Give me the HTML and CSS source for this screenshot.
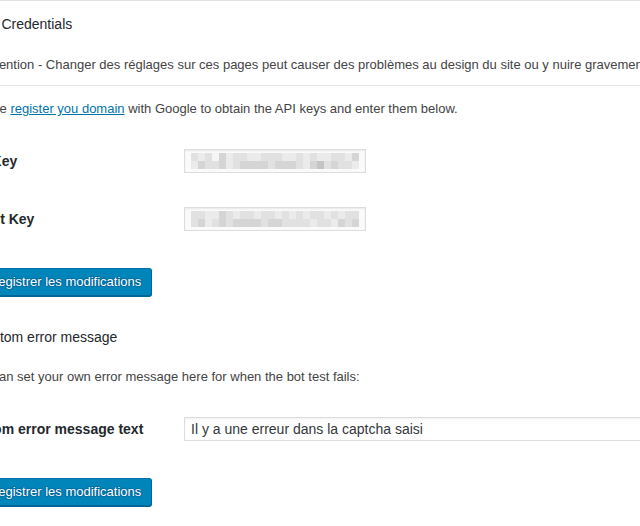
FILE: index.html
```html
<!DOCTYPE html>
<html lang="fr">
<head>
<meta charset="utf-8">
<title>API Credentials</title>
<link rel="stylesheet" href="styles.css">
</head>
<body>
<div class="page">
  <div class="wrap">
    <h3 class="title">API Credentials</h3>
    <div class="notice"><p>Attention - Changer des réglages sur ces pages peut causer des problèmes au design du site ou y nuire gravement.</p></div>
    <p class="desc first">Please <a href="#">register you domain</a> with Google to obtain the API keys and enter them below.</p>
    <div class="form-table">
      <div class="form-row">
        <label class="label">Site Key</label>
        <div class="field short">
          <div class="blur">
            <span class="g2"></span><span class="g1"></span><span class="g2"></span><span class="g0"></span><span class="g3"></span><span class="g1"></span><span class="g2"></span><span class="g2"></span><span class="g1"></span><span class="g1"></span><span class="g2"></span><span class="g2"></span><span class="g2"></span><span class="g1"></span><span class="g1"></span><span class="g2"></span><span class="g1"></span><span class="g2"></span><span class="g1"></span><span class="g1"></span><span class="g2"></span><span class="g2"></span><span class="g1"></span><span class="g3"></span>
            <span class="g1"></span><span class="g3"></span><span class="g2"></span><span class="g2"></span><span class="g3"></span><span class="g1"></span><span class="g2"></span><span class="g3"></span><span class="g3"></span><span class="g3"></span><span class="g3"></span><span class="g2"></span><span class="g3"></span><span class="g3"></span><span class="g3"></span><span class="g2"></span><span class="g1"></span><span class="g3"></span><span class="g4"></span><span class="g2"></span><span class="g3"></span><span class="g2"></span><span class="g2"></span><span class="g1"></span>
          </div>
        </div>
      </div>
      <div class="form-row">
        <label class="label">Secret Key</label>
        <div class="field short">
          <div class="blur">
            <span class="g2"></span><span class="g2"></span><span class="g1"></span><span class="g1"></span><span class="g3"></span><span class="g2"></span><span class="g1"></span><span class="g2"></span><span class="g2"></span><span class="g1"></span><span class="g2"></span><span class="g2"></span><span class="g1"></span><span class="g2"></span><span class="g1"></span><span class="g2"></span><span class="g1"></span><span class="g2"></span><span class="g2"></span><span class="g1"></span><span class="g2"></span><span class="g1"></span><span class="g2"></span><span class="g2"></span>
            <span class="g2"></span><span class="g3"></span><span class="g1"></span><span class="g2"></span><span class="g3"></span><span class="g2"></span><span class="g3"></span><span class="g3"></span><span class="g3"></span><span class="g3"></span><span class="g2"></span><span class="g3"></span><span class="g3"></span><span class="g2"></span><span class="g2"></span><span class="g2"></span><span class="g2"></span><span class="g1"></span><span class="g2"></span><span class="g2"></span><span class="g1"></span><span class="g3"></span><span class="g2"></span><span class="g3"></span>
          </div>
        </div>
      </div>
    </div>
    <button class="button-primary" type="button">Enregistrer les modifications</button>

    <h3 class="title second">Custom error message</h3>
    <p class="desc">You can set your own error message here for when the bot test fails:</p>
    <div class="form-table">
      <div class="form-row">
        <label class="label">Custom error message text</label>
        <input class="field long" type="text" value="Il y a une erreur dans la captcha saisi">
      </div>
    </div>
    <button class="button-primary" type="button">Enregistrer les modifications</button>
  </div>
</div>
</body>
</html>
```

FILE: styles.css
```css
html, body {
  margin: 0;
  padding: 0;
  background: #fff;
}
body {
  width: 640px;
  height: 526px;
  overflow: hidden;
  font-family: "Liberation Sans", Arial, sans-serif;
  font-size: 13px;
  color: #444;
}
.page {
  border-top: 1px solid #e1e1e1;
}
.wrap {
  margin-left: -33px;
  width: 700px;
}
.title {
  margin: 13px 0 0;
  padding-left: 8px;
  font-size: 14px;
  font-weight: normal;
  line-height: 20px;
  color: #23282d;
  white-space: nowrap;
}
.title.second {
  margin-top: 31px;
}
.notice {
  margin-top: 11px;
  padding: 10px 12px;
  border-left: 4px solid transparent;
  border-bottom: 1px solid #e5e5e5;
}
.notice p {
  margin: 0;
  line-height: 20px;
  white-space: nowrap;
}
.desc {
  margin: 20px 0 0;
  line-height: 20px;
  white-space: nowrap;
}
.desc.first {
  margin-top: 13px;
}
.desc a {
  color: #0073aa;
  text-decoration: underline;
}
.form-table {
  margin: 13px 0 20px;
}
.form-row {
  display: grid;
  grid-template-columns: 217px 1fr;
  align-items: start;
  padding: 17px 0;
}
.label {
  margin-left: -5px;
  font-size: 14px;
  font-weight: bold;
  line-height: 24px;
  color: #23282d;
  white-space: nowrap;
}
.field {
  box-sizing: border-box;
  height: 24px;
  border: 1px solid #ddd;
  background: #fff;
  box-shadow: inset 0 1px 2px rgba(0, 0, 0, 0.07);
}
.field.short {
  width: 182px;
  padding: 2px 6px;
  background: #fafafa;
}
.field.long {
  width: 480px;
  margin: 0;
  padding: 0 6px;
  font-family: "Liberation Sans", Arial, sans-serif;
  font-size: 14px;
  color: #32373c;
  outline: none;
}
.blur {
  display: grid;
  grid-template-columns: repeat(24, 7px);
  grid-auto-rows: 8px;
  margin-top: 1px;
}
.blur span { display: block; }
.g0 { background: #f5f5f5; }
.g1 { background: #ebebeb; }
.g2 { background: #e1e1e1; }
.g3 { background: #d5d5d5; }
.g4 { background: #c4c4c4; }
.button-primary {
  display: block;
  box-sizing: border-box;
  height: 28px;
  margin: 0;
  padding: 0 10px 1px;
  font-family: "Liberation Sans", Arial, sans-serif;
  font-size: 13px;
  line-height: 26px;
  color: #fff;
  background: #0085ba;
  border: 1px solid;
  border-color: #0073aa #006799 #006799;
  border-radius: 3px;
  box-shadow: 0 1px 0 #006799;
  text-shadow: 0 -1px 1px #006799, 1px 0 1px #006799, 0 1px 1px #006799, -1px 0 1px #006799;
  white-space: nowrap;
  cursor: pointer;
}
```
